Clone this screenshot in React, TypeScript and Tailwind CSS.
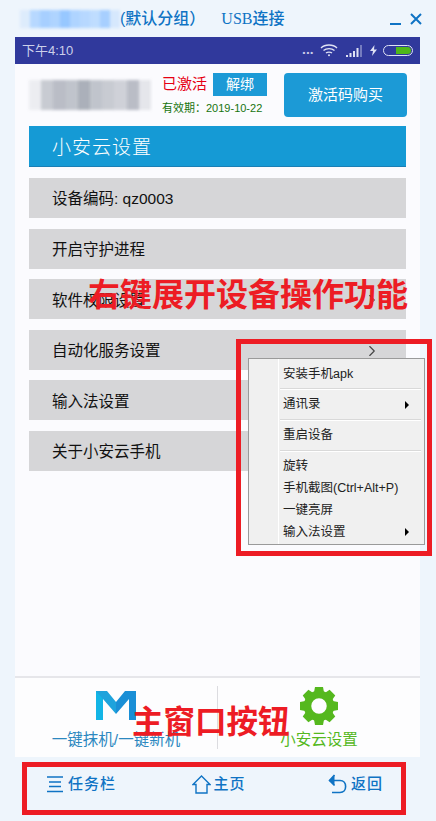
import React from 'react';
import { ChevronRight } from 'lucide-react';

const cjk = "font-['Liberation_Sans','Noto_Sans_CJK_SC',sans-serif]";

const mosaic = [10, 35, 45, 40, 55, 40, 35, 30, 45, 15];

const Mosaic: React.FC<{ dark?: boolean; className?: string }> = ({ dark, className = '' }) => (
  <div className={`flex blur-[1.5px] ${className}`}>
    {mosaic.map((o, i) => (
      <div
        key={i}
        className={`h-full flex-1 ${dark ? 'bg-gray-500' : 'bg-blue-400'}`}
        style={{ opacity: o / 100 }}
      />
    ))}
  </div>
);

const rows = [
  { label: '设备编码: qz0003' },
  { label: '开启守护进程' },
  { label: '软件权限设置', arrow: true },
  { label: '自动化服务设置', arrow: true },
  { label: '输入法设置' },
  { label: '关于小安云手机' },
];

const MenuItem: React.FC<{ label: string; sub?: boolean; className?: string }> = ({ label, sub, className = 'h-[21px]' }) => (
  <div className={`flex items-center justify-between pl-[4px] pr-[15px] text-[12.5px] text-[#222] ${className}`}>
    <span>{label}</span>
    {sub && <span className="h-0 w-0 border-y-[4px] border-l-[4px] border-y-transparent border-l-black" />}
  </div>
);

const MenuSep = () => <div className="ml-[1px] mr-[3px] h-[2px] border-t border-[#d9d9d9] bg-white" />;

const Gear = () => (
  <svg width="40" height="40" viewBox="0 0 40 40" className="text-[#55b81e]">
    {[0, 45, 90, 135, 180, 225, 270, 315].map((a) => (
      <path key={a} d="M16 1 H24 L25.5 9 H14.5 Z" fill="currentColor" transform={`rotate(${a} 20 20)`} />
    ))}
    <circle cx="20" cy="20" r="11.5" fill="none" stroke="currentColor" strokeWidth="7.5" />
  </svg>
);

const MLogo = () => (
  <svg width="40" height="31" viewBox="0 0 40 31">
    <path d="M0 1 H11 L20 12 V24 L7 9 V30 H0 Z" fill="#1ea3dc" />
    <path d="M7 9 V30 H0 V1 Z" fill="#12b5e6" />
    <path d="M40 1 H29 L20 12 V24 L33 9 V30 H40 Z" fill="#1a8fd6" />
  </svg>
);

export default function App() {
  return (
    <div className={`relative flex h-[821px] w-[436px] flex-col overflow-hidden bg-[#eef5fc] ${cjk}`}>
      {/* window title */}
      <div className="flex h-[37px] shrink-0 items-center pl-[20px] pr-[14px] text-[#0f73c4]">
        <Mosaic className="h-[18px] w-[100px]" />
        <span className="text-[16px] font-medium">(默认分组）</span>
        <span className="ml-[16px] text-[16px] font-medium font-['Liberation_Serif','Noto_Sans_CJK_SC',serif]">USB连接</span>
        <div className="ml-auto flex items-center gap-[9px]">
          <div className="mt-[10px] h-[2px] w-[11px] bg-[#0f73c4]" />
          <svg width="12" height="12" viewBox="0 0 12 12" stroke="#0f73c4" strokeWidth="2">
            <path d="M1 1 L11 11 M11 1 L1 11" />
          </svg>
        </div>
      </div>

      {/* phone screen */}
      <div className="ml-[15px] flex h-[720px] w-[405px] flex-col bg-[#fbfbfe]">
        <div className="flex h-[27px] shrink-0 items-center justify-between pl-[7px] pr-[7px] text-[13px] text-[#ccd0ea] bg-[#30399c]">
          <span>下午4:10</span>
          <div className="flex items-center gap-[6px]">
            <span className="mt-[5px] text-[8px] font-bold tracking-[1px]">•••</span>
            <svg width="18" height="13" viewBox="0 0 18 13" fill="none" stroke="#dfe2f4" strokeWidth="1.4">
              <path d="M1 4 C5 0 13 0 17 4 M3.5 6.5 C6.5 4 11.5 4 14.5 6.5 M6 9 C7.5 7.8 10.5 7.8 12 9" />
              <circle cx="9" cy="11.3" r="1" fill="#dfe2f4" stroke="none" />
            </svg>
            <svg width="18" height="12" viewBox="0 0 18 12" fill="#dfe2f4" className="ml-[2px]">
              <path d="M0 10h2v2H0z M3.5 8h2v4h-2z M7 6h2v6H7z M10.5 3h2v9h-2z" />
              <path d="M14 0h2v12h-2z" opacity="0.4" />
            </svg>
            <svg width="7" height="11" viewBox="0 0 7 11" fill="#dfe2f4">
              <path d="M4.5 0 L0 6 H3 L2 11 L7 4.5 H4 Z" />
            </svg>
            <div className="flex h-[11px] w-[30px] items-center justify-end rounded-full border border-[#dfe2f4] pr-[1px]">
              <div className="h-[7px] w-[15px] rounded-r-full bg-[#4fb81a]" />
            </div>
          </div>
        </div>

        {/* account + activation */}
        <div className="flex h-[62px] shrink-0 pl-[14px] pr-[13px] pt-[9px]">
          <Mosaic dark className="mt-[7px] h-[30px] w-[122px]" />
          <div className="ml-[11px] w-[105px]">
            <div className="flex items-center">
              <span className="text-[15px] text-[#e60012]">已激活</span>
              <span className="ml-[6px] flex h-[23px] w-[54px] shrink-0 items-center justify-center bg-[#1c9ad6] text-[14px] text-white">解绑</span>
            </div>
            <div className="mt-[4px] whitespace-nowrap text-[11px] text-[#17740f]">有效期：2019-10-22</div>
          </div>
          <div className="ml-[17px] flex h-[44px] w-[123px] items-center justify-center rounded-[4px] bg-[#1c9ad6] text-[15px] text-white">
            激活码购买
          </div>
        </div>

        {/* settings list */}
        <div className="flex flex-col px-[14px]">
          <div className="mb-[11px] flex h-[41px] items-center border-b border-[#1a7fb5] bg-[#159ad5] pl-[23px] pt-[5px] text-[19px] font-light tracking-[1px] text-white">
            小安云设置
          </div>
          <div className="flex flex-col gap-[10.6px]">
            {rows.map((r) => (
              <div key={r.label} className="flex h-[40px] items-center justify-between bg-[#d6d6d8] pl-[23px] pr-[25px] pt-[2px] text-[15.5px] text-[#111]">
                <span>{r.label}</span>
                {r.arrow && <ChevronRight size={18} className="text-[#444]" strokeWidth={1.5} />}
              </div>
            ))}
          </div>
        </div>

        {/* main window buttons */}
        <div className="mt-auto flex h-[81px] border-t-2 border-[#e6e6ea] bg-[#fdfdfe]">
          <div className="flex w-[202px] flex-col items-center pt-[12px]">
            <MLogo />
            <span className="mt-[7px] text-[15.5px] text-[#2c88c0]">一键抹机/一键新机</span>
          </div>
          <div className="my-[8px] w-px bg-[#dcdce0]" />
          <div className="flex flex-1 flex-col items-center pt-[8px]">
            <Gear />
            <span className="mt-[2px] text-[15.5px] text-[#55b81e]">小安云设置</span>
          </div>
        </div>
      </div>

      {/* bottom nav */}
      <div className="flex flex-1 items-start justify-between pl-[46px] pr-[53px] pt-[16px] text-[15px] font-medium tracking-[1px] text-[#0f73c4]">
        <div className="flex items-center gap-[4px]">
          <svg width="18" height="18" viewBox="0 0 18 18" fill="none" stroke="currentColor" strokeWidth="1.3">
            <path d="M1 2 H17 M3 7 H15 M3 11.5 H15 M1 16.5 H17" />
          </svg>
          <span>任务栏</span>
        </div>
        <div className="mr-[6px] flex items-center gap-[2px]">
          <svg width="19" height="19" viewBox="0 0 19 19" fill="none" stroke="currentColor" strokeWidth="1.4">
            <path d="M1 9.5 L9.5 1 L18 9.5 H15 V18 H4 V9.5 Z" />
          </svg>
          <span>主页</span>
        </div>
        <div className="flex items-center gap-[3px]">
          <svg width="20" height="20" viewBox="0 0 20 20" fill="none" stroke="currentColor" strokeWidth="1.6">
            <path d="M1.5 6.5 H12 C19.5 6.5 19.5 18.5 12 18.5 H4" />
            <path d="M6.5 1 L1.5 6.5 L6.5 11.5" fill="currentColor" />
          </svg>
          <span>返回</span>
        </div>
      </div>

      {/* annotations on top of the screenshot */}
      <div className="absolute left-[88px] top-[275px] whitespace-nowrap text-[32px] font-bold leading-[40px] text-[#ed1c24]">
        右键展开设备操作功能
      </div>
      <div className="absolute left-[132px] top-[702px] whitespace-nowrap text-[31.5px] font-bold leading-[40px] text-[#ed1c24]">
        主窗口按钮
      </div>

      <div className="absolute left-[236px] top-[339px] h-[217px] w-[196px] border-[5px] border-[#ed1c24]" />
      <div className="absolute left-[22px] top-[762px] h-[53px] w-[384px] border-[5px] border-[#ed1c24]" />

      {/* context menu */}
      <div className="absolute left-[248px] top-[358px] h-[187px] w-[177px] border border-[#9a9a9a] bg-[#f0f0f0] pl-[30px] pt-[3px]">
        <div className="absolute bottom-0 left-[29px] top-0 w-px bg-white" />
        <MenuItem label="安装手机apk" className="h-[24px]" />
        <div className="h-[2px]" />
        <MenuSep />
        <MenuItem label="通讯录" sub className="h-[29px]" />
        <MenuSep />
        <MenuItem label="重启设备" className="h-[29px]" />
        <MenuSep />
        <MenuItem label="旋转" className="mt-[4px] h-[20px]" />
        <MenuItem label="手机截图(Ctrl+Alt+P)" className="h-[24px]" />
        <MenuItem label="一键亮屏" />
        <MenuItem label="输入法设置" sub className="h-[22px]" />
      </div>
    </div>
  );
}
